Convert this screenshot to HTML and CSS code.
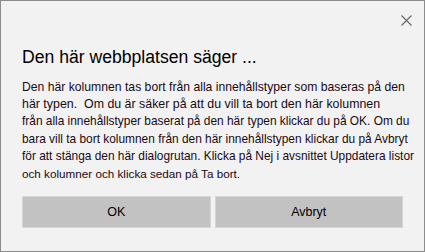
FILE: index.html
```html
<!DOCTYPE html>
<html lang="sv">
<head>
<meta charset="utf-8">
<link rel="stylesheet" href="styles.css">
</head>
<body>
<div class="dialog">
  <div class="topbar">
    <button class="close" aria-label="Stäng">
      <svg width="11" height="11" viewBox="0 0 11 11"><path d="M0.5 0.5 L10.5 10.5 M10.5 0.5 L0.5 10.5" stroke="#6b6b6b" stroke-width="1.2" fill="none"/></svg>
    </button>
  </div>
  <h1 class="title">Den här webbplatsen säger ...</h1>
  <p class="message">
    <span class="l l1">Den här kolumnen tas bort från alla innehållstyper som baseras på den</span>
    <span class="l l2">här typen.&nbsp; Om du är säker på att du vill ta bort den här kolumnen</span>
    <span class="l l3">från alla innehållstyper baserat på den här typen klickar du på OK. Om du</span>
    <span class="l l4">bara vill ta bort kolumnen från den här innehållstypen klickar du på Avbryt</span>
    <span class="l l5">för att stänga den här dialogrutan. Klicka på Nej i avsnittet Uppdatera listor</span>
    <span class="l l6">och kolumner och klicka sedan på Ta bort.</span>
  </p>
  <div class="actions">
    <button class="btn">OK</button>
    <button class="btn">Avbryt</button>
  </div>
</div>
</body>
</html>
```
FILE: styles.css
```css
html, body {
  margin: 0;
  padding: 0;
  width: 425px;
  height: 252px;
  overflow: hidden;
}
body {
  font-family: "Liberation Sans", Arial, sans-serif;
  color: #000;
}
.dialog {
  box-sizing: border-box;
  width: 425px;
  height: 252px;
  background: #f2f2f2;
  border: 1px solid #8c8c8c;
  display: flex;
  flex-direction: column;
  padding: 0 20px 0 21px;
}
.topbar {
  display: flex;
  justify-content: flex-end;
  height: 30px;
  padding-top: 14px;
  box-sizing: border-box;
  margin-right: -8px;
}
.close {
  border: 0;
  background: none;
  padding: 0;
  width: 11px;
  height: 11px;
  display: flex;
}
.title {
  margin: 16px 0 0 0;
  font-weight: normal;
  font-size: 17.6px;
  line-height: 20px;
}
.message {
  margin: 12px 0 0 0;
  font-size: 11.9px;
  line-height: 17.2px;
  color: #1a0a14;
}
.l {
  display: block;
  white-space: nowrap;
}
.l1 {
  font-size: 12.2px;
}
.l2 {
  font-size: 12.4px;
}
.l6 {
  font-size: 11.7px;
}
.actions {
  display: flex;
  gap: 4px;
  margin-top: 14px;
  padding-right: 1px;
}
.btn {
  flex: 1;
  height: 32px;
  background: #c2c2c2;
  border: 1px solid #d6d6d6;
  font-family: "Liberation Sans", Arial, sans-serif;
  font-size: 12.5px;
  color: #000;
  padding: 0;
}
```
